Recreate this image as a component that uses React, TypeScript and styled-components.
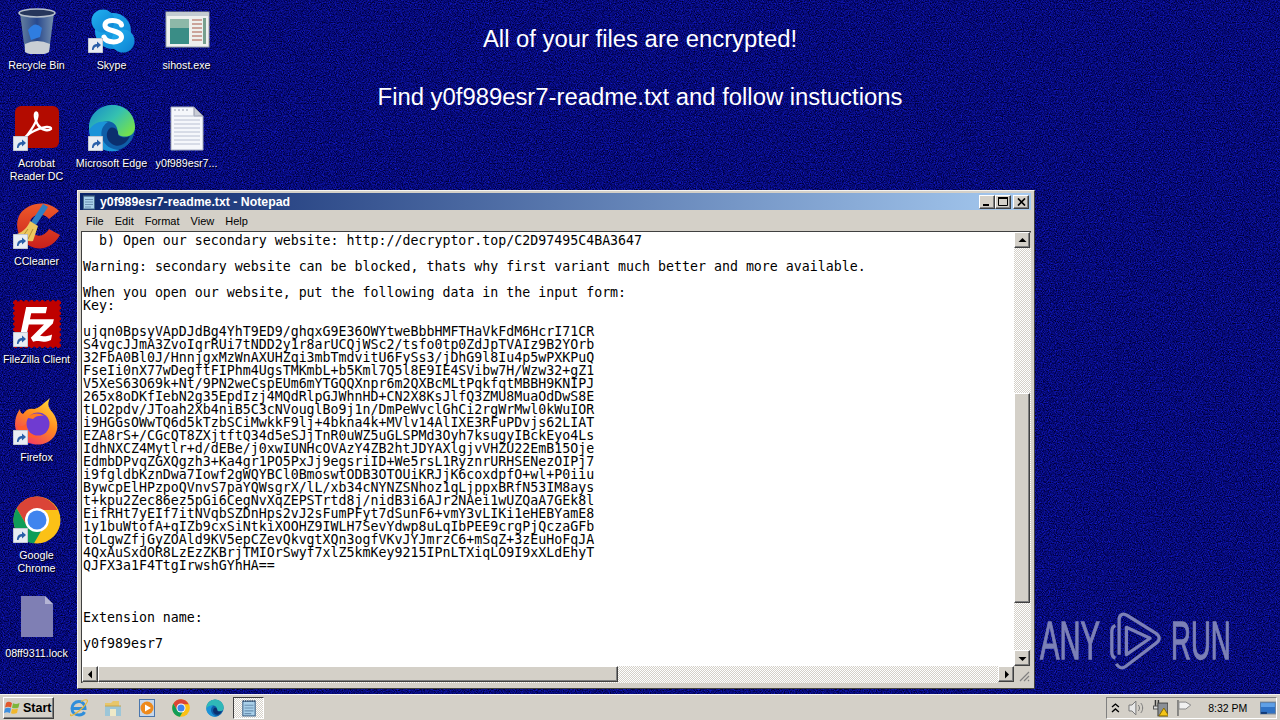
import React from "react";
import styled, { createGlobalStyle } from "styled-components";
import { SiFilezilla } from "react-icons/si";

const GlobalStyle = createGlobalStyle`
  html, body {
    margin: 0;
    width: 1280px;
    height: 720px;
    overflow: hidden;
    background: #0a0d7c;
  }
`;

const Colors = {
  face: "#d4d0c8",
  shade: "#808080",
  dark: "#404040",
  label: "#ffffff",
  mark: "#7c80b6",
};

const Screen = styled.div`
  position: relative;
  width: 1280px;
  height: 720px;
  overflow: hidden;
  display: flex;
  flex-direction: column;
  font-family: "Liberation Sans", Arial, sans-serif;
`;

const Wallpaper = styled.svg`
  position: absolute;
  inset: 0;
  width: 1280px;
  height: 720px;
`;

const Desktop = styled.div`
  position: relative;
  flex: 1;
  min-height: 0;
`;

const Message = styled.div`
  position: absolute;
  top: 10px;
  left: 0;
  right: 0;
  display: flex;
  flex-direction: column;
  align-items: center;
  color: #fff;
  font-size: 23.85px;
  line-height: 58px;
`;

const IconGrid = styled.div`
  position: absolute;
  top: 6px;
  left: -1px;
  display: grid;
  grid-template-columns: repeat(3, 75px);
  grid-auto-rows: 98px;
`;

const IconCell = styled.div<{ $col: number; $row: number }>`
  grid-column: ${(p) => p.$col};
  grid-row: ${(p) => p.$row};
  display: flex;
  flex-direction: column;
  align-items: center;
`;

const IconFrame = styled.div`
  position: relative;
  width: 48px;
  height: 48px;
  flex: none;

  & > svg {
    display: block;
  }
`;

const LinkBadge = styled.svg`
  position: absolute;
  left: 0;
  bottom: 1px;
  width: 15px;
  height: 15px;
`;

const IconLabel = styled.div`
  margin-top: 5px;
  width: 75px;
  text-align: center;
  color: ${Colors.label};
  font-size: 10.7px;
  line-height: 13px;
  white-space: pre-line;
  text-shadow: 1px 1px 1px #000;
`;

const Watermark = styled.div`
  position: absolute;
  top: 610px;
  left: 1040px;
  width: 191px;
  height: 62px;
  display: flex;
  align-items: center;
  gap: 10px;
  color: ${Colors.mark};
`;

const WatermarkWord = styled.span<{ $squeeze: number }>`
  font-size: 53px;
  line-height: 62px;
  width: 60px;
  flex: none;
  white-space: nowrap;
  transform: scaleX(${(p) => p.$squeeze});
  transform-origin: left center;
  -webkit-text-stroke: 1.3px ${Colors.mark};
`;

const Window = styled.div`
  position: absolute;
  top: 190px;
  left: 77px;
  width: 958px;
  height: 499px;
  box-sizing: border-box;
  padding: 2px 3px 5px 2px;
  display: flex;
  flex-direction: column;
  background: ${Colors.face};
  border-top: 1px solid #f4f2ee;
  border-left: 1px solid #f4f2ee;
  border-right: 1px solid ${Colors.dark};
  border-bottom: 1px solid ${Colors.dark};
`;

const TitleBar = styled.div`
  height: 17px;
  flex: none;
  display: flex;
  align-items: center;
  padding: 0 2px 0 1px;
  gap: 3px;
  background: linear-gradient(90deg, #0a246a, #a6caf0);
  color: #fff;
  font-size: 12.3px;
  font-weight: 700;
`;

const TitleText = styled.span`
  flex: 1;
`;

const CaptionGroup = styled.div`
  display: flex;
  align-items: center;
`;

const RaisedButton = styled.div`
  box-sizing: border-box;
  display: flex;
  align-items: center;
  justify-content: center;
  flex: none;
  background: ${Colors.face};
  border-top: 1px solid #fff;
  border-left: 1px solid #fff;
  border-right: 1px solid ${Colors.dark};
  border-bottom: 1px solid ${Colors.dark};
  box-shadow: inset -1px -1px 0 ${Colors.shade};
`;

const CaptionButton = styled(RaisedButton)<{ $gap?: number }>`
  width: 16px;
  height: 14px;
  margin-left: ${(p) => p.$gap ?? 0}px;
`;

const MenuBar = styled.div`
  height: 20px;
  flex: none;
  display: flex;
  align-items: center;
  gap: 11px;
  padding: 1px 0 0 6px;
  font-size: 11px;
  color: #000;
`;

const Client = styled.div`
  flex: 1;
  min-height: 0;
  display: flex;
  flex-direction: column;
  margin-left: 1px;
  border-top: 1px solid ${Colors.dark};
  border-left: 1px solid ${Colors.dark};
  box-shadow: inset 1px 1px 0 ${Colors.shade};
`;

const ClientRow = styled.div`
  flex: 1;
  min-height: 0;
  display: flex;
`;

const TextPane = styled.pre`
  flex: 1;
  margin: 0;
  padding: 2px 0 0 1px;
  overflow: hidden;
  background: #fff;
  color: #000;
  font-family: "DejaVu Sans Mono", "Liberation Mono", monospace;
  font-size: 13.28px;
  line-height: 13px;
`;

const VerticalBar = styled.div`
  width: 17px;
  flex: none;
  display: flex;
  flex-direction: column;
`;

const HorizontalBar = styled.div`
  height: 17px;
  flex: none;
  display: flex;
`;

const Track = styled.div`
  flex: 1;
  min-width: 0;
  min-height: 0;
  background: repeating-conic-gradient(${Colors.face} 0 25%, #fff 0 50%) 0 0 / 2px 2px;
`;

const ArrowButton = styled(RaisedButton)`
  width: 16px;
  height: 16px;
`;

const VerticalThumb = styled(RaisedButton)`
  width: 16px;
  height: 210px;
  margin-top: 145px;
`;

const HorizontalThumb = styled(RaisedButton)`
  width: 520px;
  height: 16px;
`;

const Grip = styled.div`
  width: 17px;
  flex: none;
  background: ${Colors.face};
`;

const Taskbar = styled.div`
  position: relative;
  margin-top: auto;
  height: 26px;
  flex: none;
  box-sizing: border-box;
  display: flex;
  align-items: center;
  padding: 1px 3px 0 3px;
  background: ${Colors.face};
  border-top: 1px solid #f4f2ee;
`;

const StartButton = styled(RaisedButton)`
  width: 51px;
  height: 22px;
  gap: 1px;
  justify-content: flex-start;
  font-size: 12.5px;
  font-weight: 700;
  color: #000;
`;

const QuickLaunch = styled.div`
  display: flex;
  align-items: center;
  gap: 14px;
  margin-left: 15px;
`;

const QuickSlot = styled.div`
  width: 20px;
  height: 20px;
  display: flex;
  align-items: center;
  justify-content: center;
`;

const TaskButton = styled.div`
  width: 31px;
  height: 22px;
  box-sizing: border-box;
  margin-left: 8px;
  display: flex;
  align-items: center;
  justify-content: center;
  background: repeating-conic-gradient(${Colors.face} 0 25%, #fff 0 50%) 0 0 / 2px 2px;
  border-top: 1px solid ${Colors.dark};
  border-left: 1px solid ${Colors.dark};
  border-right: 1px solid #fff;
  border-bottom: 1px solid #fff;
`;

const Tray = styled.div`
  margin-left: auto;
  width: 171px;
  height: 22px;
  box-sizing: border-box;
  display: flex;
  align-items: center;
  padding-left: 4px;
  gap: 8px;
  border-top: 1px solid ${Colors.shade};
  border-left: 1px solid ${Colors.shade};
  border-right: 1px solid #fff;
  border-bottom: 1px solid #fff;
`;

const Clock = styled.span`
  margin-left: 8px;
  width: 44px;
  flex: none;
  font-size: 10.5px;
  color: #000;
`;

const NOTE = `  b) Open our secondary website: http://decryptor.top/C2D97495C4BA3647

Warning: secondary website can be blocked, thats why first variant much better and more available.

When you open our website, put the following data in the input form:
Key:

ujqn0BpsyVApDJdBg4YhT9ED9/ghqxG9E36OWYtweBbbHMFTHaVkFdM6HcrI71CR
S4vgcJJmA3ZvoIqrRUi7tNDD2y1r8arUCQjWSc2/tsfo0tp0ZdJpTVAIz9B2YOrb
32FbA0Bl0J/HnnjgxMzWnAXUHZqi3mbTmdvitU6FySs3/jDhG9l8Iu4p5wPXKPuQ
FseIi0nX77wDegftFIPhm4UgsTMKmbL+b5Kml7Q5l8E9IE4SVibw7H/Wzw32+gZ1
V5XeS63O69k+Nt/9PN2weCspEUm6mYTGQQXnpr6m2QXBcMLtPqkfqtMBBH9KNIPJ
265x8oDKfIebN2g35EpdIzj4MQdRlpGJWhnHD+CN2X8KsJlfQ3ZMU8MuaOdDwS8E
tLO2pdv/JToah2Xb4niB5C3cNVouglBo9j1n/DmPeWvclGhCi2rgWrMwl0kWuIOR
i9HGGsOWwTQ6d5kTzbSCiMwkkF9lj+4bkna4k+MVlv14AlIXE3RFuPDvjs62LIAT
EZA8rS+/CGcQT8ZXjtftQ34d5eSJjTnR0uWZ5uGLSPMd3Oyh7ksugyIBckEyo4Ls
IdhNXCZ4Mytlr+d/dEBe/j0xwIUNHcOVAzY4ZB2htJDYAXlgjvVHZU22EmB15Oje
EdmbDPvqZGXQgzh3+Ka4gr1PO5PxJj9egsriID+We5rsL1RyznrURHSENezOIPj7
i9fgldbKznDwa7Iowf2gWQYBCl0BmoswtODB3OTOUiKRJjK6coxdpfO+wl+P0iiu
BywcpElHPzpoQVnvS7paYQWsgrX/lL/xb34cNYNZSNhoz1qLjppxBRfN53IM8ays
t+kpu2Zec86ez5pGi6CegNvXqZEPSTrtd8j/nidB3i6AJr2NAei1wUZQaA7GEk8l
EifRHt7yEIf7itNVqbSZDnHps2vJ2sFumPFyt7dSunF6+vmY3vLIKi1eHEBYamE8
1y1buWtofA+qIZb9cxSiNtkiXOOHZ9IWLH7SevYdwp8uLqIbPEE9crgPjQczaGFb
toLgwZfjGyZOAld9KV5epCZevQkvgtXQn3ogfVKvJYJmrzC6+mSqZ+3zEuHoFqJA
4QxAuSxdOR8LzEzZKBrjTMIOrSwyf7xlZ5kmKey9215IPnLTXiqLO9I9xXLdEhyT
QJFX3a1F4TtgIrwshGYhHA==



Extension name:

y0f989esr7`;

const Arrow = ({ dir }: { dir: "up" | "down" | "left" | "right" }) => {
  const points = {
    up: "0.5,6 4.5,2 8.5,6",
    down: "0.5,3 4.5,7 8.5,3",
    left: "6,0.5 2,4.5 6,8.5",
    right: "3,0.5 7,4.5 3,8.5",
  };
  return (
    <svg width="9" height="9" viewBox="0 0 9 9">
      <polygon points={points[dir]} fill="#000" />
    </svg>
  );
};

const NotepadGlyph = ({ size = 16 }: { size?: number }) => (
  <svg width={size} height={size} viewBox="0 0 16 16">
    <rect x="2.5" y="2" width="11" height="13" fill="#a9d0ea" stroke="#45688c" />
    <path d="M4 5.5h8M4 8h8M4 10.5h8M4 13h6" stroke="#6b8fb0" />
    <path d="M3 2.5V1M5 2.5V1M7 2.5V1M9 2.5V1M11 2.5V1M13 2.5V1" stroke="#334a66" />
  </svg>
);

const RecycleBin = () => (
  <svg width="48" height="48" viewBox="0 0 48 48">
    <defs>
      <linearGradient id="binBody" x1="0" x2="1">
        <stop offset="0" stopColor="#66809f" />
        <stop offset="0.5" stopColor="#28488c" />
        <stop offset="1" stopColor="#7690ae" />
      </linearGradient>
    </defs>
    <path d="M7 7 L12 46 Q24 52 36 46 L41 7 Z" fill="url(#binBody)" />
    <path d="M12 38 Q24 32 37 38 L36 46 Q24 52 12 46 Z" fill="#c9ced4" />
    <path d="M15 24 Q22 14 29 22 L27 31 L18 34 Z" fill="#2f7de0" />
    <ellipse cx="24" cy="7" rx="18" ry="4" fill="#26365c" stroke="#b6c0cc" strokeWidth="1.6" />
  </svg>
);

const SkypeIcon = () => (
  <svg width="48" height="48" viewBox="0 0 48 48">
    <defs>
      <linearGradient id="skypeFill" x1="0" y1="0" x2="1" y2="1">
        <stop offset="0" stopColor="#22b3f2" />
        <stop offset="1" stopColor="#0b7fd0" />
      </linearGradient>
    </defs>
    <g fill="url(#skypeFill)">
      <circle cx="25" cy="25" r="18" />
      <circle cx="15" cy="15" r="11.5" />
      <circle cx="35" cy="35" r="11.5" />
    </g>
    <path
      d="M33.5 19 C32 13.5 17.5 12.5 17 19 C16.5 26 33.5 23.5 33.5 31 C33.5 37.5 18.5 37.5 16 31"
      fill="none"
      stroke="#fff"
      strokeWidth="5"
      strokeLinecap="round"
    />
  </svg>
);

const SihostIcon = () => (
  <svg width="48" height="48" viewBox="0 0 48 48">
    <rect x="3" y="6" width="43" height="35" fill="#eef0ee" stroke="#9aa3a8" />
    <rect x="4" y="7" width="41" height="3" fill="#c3ccd2" />
    <rect x="7" y="13" width="19" height="25" fill="#3a8d86" />
    <rect x="7" y="13" width="19" height="9" fill="#8db8a8" />
    <path d="M29 14h10M29 18h10M29 22h10M29 26h10M29 30h10M29 34h10" stroke="#c08a80" strokeWidth="1.4" />
    <rect x="40" y="12" width="3" height="26" fill="#77a08e" />
  </svg>
);

const AcrobatIcon = () => (
  <svg width="48" height="48" viewBox="0 0 48 48">
    <rect x="2" y="2" width="44" height="42" rx="6" fill="#b30b00" />
    <path
      d="M12 34 C20 24 26 14 24 9 C22 7 20 12 25 21 C29 27 36 27 38 25 C39 22 30 22 21 27 C15 30 12 33 12 34 Z"
      fill="none"
      stroke="#fff"
      strokeWidth="2.4"
    />
  </svg>
);

const EdgeIcon = () => (
  <svg width="48" height="48" viewBox="0 0 48 48">
    <defs>
      <linearGradient id="edgeTop" x1="0" y1="0" x2="1" y2="0.7">
        <stop offset="0" stopColor="#1689c9" />
        <stop offset="0.55" stopColor="#35c1b0" />
        <stop offset="1" stopColor="#72e04f" />
      </linearGradient>
    </defs>
    <circle cx="24" cy="24" r="23" fill="#0f5ea8" />
    <path d="M1 24 C1 9 13 1 25 1 C38 1 47 11 47 23 C47 31 40 34 33 32 C29 31 30 27 29 24 C27 18 21 16 15 18 C8 20 3 24 1 27 Z" fill="url(#edgeTop)" />
    <path d="M1 26 C5 19 13 16 20 18 C15 21 12 27 14 34 C16 41 23 46 32 46 C24 49 11 47 5 38 C2 34 1 30 1 26 Z" fill="#1b93d8" />
    <path d="M22 24 C27 22 31 27 30 31 C33 34 38 34 42 32 C38 41 30 44 24 40 C18 36 17 28 22 24 Z" fill="#0b2f6e" />
  </svg>
);

const PageIcon = ({ ruled }: { ruled: boolean }) => (
  <svg width="48" height="48" viewBox="0 0 48 48">
    {ruled ? (
      <>
        <path d="M8 3 H31 L40 12 V46 H8 Z" fill="#f5f7fb" stroke="#a6adc0" />
        <path d="M31 3 L40 12 H31 Z" fill="#c9ccd6" stroke="#8f95a8" />
        <path d="M11 12h24M11 16h26M11 20h26M11 24h26M11 28h26M11 32h26M11 36h26M11 40h26" stroke="#b9c0d2" />
        <path d="M11 6h2M15 6h2M19 6h2M23 6h2" stroke="#9aa0b0" />
      </>
    ) : (
      <>
        <path d="M8 2 H32 L40 10 V43 H8 Z" fill="#7f7fb4" />
        <path d="M32 2 L40 10 H32 Z" fill="#b4b4d4" />
      </>
    )}
  </svg>
);

const CCleanerIcon = () => (
  <svg width="48" height="48" viewBox="0 0 48 48">
    <defs>
      <linearGradient id="ccRing" x1="0" y1="0" x2="0" y2="1">
        <stop offset="0" stopColor="#ee5a2a" />
        <stop offset="1" stopColor="#c8201c" />
      </linearGradient>
    </defs>
    <path d="M46 9 C36 -2 16 -1 7 12 C0 24 6 42 22 46 C33 48 42 42 47 33 L36 27 C33 32 28 35 23 33 C15 31 14 20 20 15 C25 11 32 12 36 17 Z" fill="url(#ccRing)" />
    <path d="M30 2 L35 5 L23 23 L18 20 Z" fill="#2f7fc4" />
    <path d="M17 19 L25 24 L20 39 C14 40 8 37 4 32 C10 30 15 25 17 19 Z" fill="#ecc75f" />
    <path d="M10 34 L15 27 M15 37 L20 27" stroke="#b78f33" />
  </svg>
);

const FileZillaIcon = () => (
  <svg width="48" height="48" viewBox="0 0 48 48">
    <rect x="2" y="2" width="44" height="44" fill="#fff" />
    <g style={{ color: "#bf0000" }}>
      <SiFilezilla x={0} y={0} size={48} />
    </g>
  </svg>
);

const FirefoxIcon = () => (
  <svg width="48" height="48" viewBox="0 0 48 48">
    <defs>
      <linearGradient id="foxBody" x1="0.8" y1="0" x2="0.2" y2="1">
        <stop offset="0" stopColor="#ffdb3a" />
        <stop offset="0.45" stopColor="#ff8a1f" />
        <stop offset="1" stopColor="#f0326a" />
      </linearGradient>
    </defs>
    <path d="M37 0 C34 7 35 9 40 15 C48 26 45 42 30 46 C15 49 2 39 2 26 C2 20 4 15 7 11 C7 14 8 15 10 16 C13 11 17 10 21 11 C26 10 30 6 37 0 Z" fill="url(#foxBody)" />
    <circle cx="25" cy="26" r="11.5" fill="#6f3bd1" />
    <path d="M14 20 C18 15 26 14 31 18 C27 17 22 18 20 21 C17 20 15 20 14 20 Z" fill="#ff7a20" />
    <path d="M3 26 C6 36 16 42 27 39 C18 38 13 32 13 26 C9 29 6 29 3 26 Z" fill="#ff5b2d" />
  </svg>
);

const ChromeIcon = ({ size = 48 }: { size?: number }) => (
  <svg width={size} height={size} viewBox="0 0 48 48">
    <circle cx="24" cy="24" r="23.5" fill="#fbc116" />
    <path d="M24 .5 A23.5 23.5 0 0 0 3.6 12.3 L14 30 L24 14 H44.4 A23.5 23.5 0 0 0 24 .5 Z" fill="#db4437" />
    <path d="M3.6 12.3 A23.5 23.5 0 0 0 21 47.3 L31 30 L14 30 Z" fill="#0f9d58" />
    <circle cx="24" cy="24" r="12" fill="#fff" />
    <circle cx="24" cy="24" r="9.5" fill="#3f84ee" />
  </svg>
);

const ShortcutBadge = () => (
  <LinkBadge viewBox="0 0 15 15">
    <rect width="15" height="15" fill="#e8ecf2" stroke="#9ca4b4" />
    <path d="M4 12 C4 8 6 6 9 6 L9 3.5 L13 7 L9 10.5 L9 8.5 C7 8.5 6 10 5.5 12 Z" fill="#2a5fa8" />
  </LinkBadge>
);

const desktopIcons = [
  { col: 1, row: 1, label: "Recycle Bin", art: <RecycleBin /> },
  { col: 1, row: 2, label: "Acrobat\nReader DC", art: <AcrobatIcon />, link: true },
  { col: 1, row: 3, label: "CCleaner", art: <CCleanerIcon />, link: true },
  { col: 1, row: 4, label: "FileZilla Client", art: <FileZillaIcon />, link: true },
  { col: 1, row: 5, label: "Firefox", art: <FirefoxIcon />, link: true },
  { col: 1, row: 6, label: "Google\nChrome", art: <ChromeIcon />, link: true },
  { col: 1, row: 7, label: "08ff9311.lock", art: <PageIcon ruled={false} /> },
  { col: 2, row: 1, label: "Skype", art: <SkypeIcon />, link: true },
  { col: 2, row: 2, label: "Microsoft Edge", art: <EdgeIcon />, link: true },
  { col: 3, row: 1, label: "sihost.exe", art: <SihostIcon /> },
  { col: 3, row: 2, label: "y0f989esr7...", art: <PageIcon ruled /> },
];

const WindowsFlag = () => (
  <svg width="18" height="16" viewBox="0 0 18 16">
    <path d="M2 3 C4 1 6 2 8 3 L7 7.5 C5 6.5 3 6.5 1 7.5 Z" fill="#e2582c" />
    <path d="M9 3.2 C11 4.2 13 4.2 15.5 3 L14.5 7.5 C12.5 8.6 10 8.6 8 7.8 Z" fill="#7db63a" />
    <path d="M1 8.5 C3 7.5 5 7.5 7 8.4 L6 13 C4 12 2 12 0 13 Z" fill="#3d8fe0" />
    <path d="M8 8.7 C10 9.5 12 9.5 14 8.5 L13 13 C11 14 9 14 7 13.2 Z" fill="#f1b72d" />
  </svg>
);

const IEGlyph = () => (
  <svg width="20" height="20" viewBox="0 0 20 20">
    <path d="M3 10.5 H16 C16 6 13 3.5 10 3.5 C6 3.5 3 6.5 3 10.5 C3 14.5 6 17 10 17 C12.5 17 14.5 16 15.5 14" fill="none" stroke="#2f8edb" strokeWidth="3" />
    <path d="M2 16 C0 19 4 18 10 13 C15 9 20 3 18 2 C16 1 13 3 12 3.5" fill="none" stroke="#e8b93a" strokeWidth="1.2" />
  </svg>
);

const FolderGlyph = () => (
  <svg width="20" height="20" viewBox="0 0 20 20">
    <path d="M2 5 H8 L10 3 H16 V8 H2 Z" fill="#e7c66a" />
    <rect x="2" y="8" width="16" height="10" fill="#9cc6d8" />
    <rect x="7" y="11" width="6" height="7" fill="#eee9c8" />
    <path d="M2 8 H18" stroke="#caa64a" />
  </svg>
);

const MediaGlyph = () => (
  <svg width="18" height="18" viewBox="0 0 18 18">
    <rect x="1.5" y="0.5" width="15" height="17" fill="#c7d7ea" stroke="#4a76ad" />
    <circle cx="9" cy="9" r="6.5" fill="#ee8a1c" />
    <polygon points="7,5.5 13,9 7,12.5" fill="#fff" />
  </svg>
);

const EdgeGlyph = () => (
  <svg width="18" height="18" viewBox="0 0 48 48">
    <circle cx="24" cy="24" r="23" fill="#0f5ea8" />
    <path d="M1 24 C1 9 13 1 25 1 C38 1 47 11 47 23 C47 31 40 34 33 32 C29 31 30 27 29 24 C27 18 21 16 15 18 C8 20 3 24 1 27 Z" fill="#2fb8b8" />
    <path d="M1 26 C5 19 13 16 20 18 C15 21 12 27 14 34 C16 41 23 46 32 46 C24 49 11 47 5 38 C2 34 1 30 1 26 Z" fill="#1b93d8" />
    <path d="M22 24 C27 22 31 27 30 31 C33 34 38 34 42 32 C38 41 30 44 24 40 C18 36 17 28 22 24 Z" fill="#0b2f6e" />
  </svg>
);

const App = () => (
  <Screen>
    <GlobalStyle />
    <Wallpaper aria-hidden>
      <filter id="grain" x="0" y="0" width="100%" height="100%" colorInterpolationFilters="sRGB">
        <feTurbulence type="fractalNoise" baseFrequency="0.85" numOctaves="2" seed="7" />
        <feColorMatrix
          type="matrix"
          values="0.15 0 0 0 -0.05  0.2 0 0 0 -0.06  1 0 0 0 -0.03  0 0 0 0 1"
        />
      </filter>
      <rect width="1280" height="720" filter="url(#grain)" />
    </Wallpaper>

    <Desktop>
      <Message>
        <span>All of your files are encrypted!</span>
        <span>Find y0f989esr7-readme.txt and follow instuctions</span>
      </Message>

      <IconGrid>
        {desktopIcons.map((icon) => (
          <IconCell key={icon.label} $col={icon.col} $row={icon.row}>
            <IconFrame>
              {icon.art}
              {icon.link && <ShortcutBadge />}
            </IconFrame>
            <IconLabel>{icon.label}</IconLabel>
          </IconCell>
        ))}
      </IconGrid>

      <Watermark>
        <WatermarkWord $squeeze={0.55}>ANY</WatermarkWord>
        <svg width="56" height="62" viewBox="0 0 56 62" fill="none" stroke={Colors.mark} strokeWidth="3.6" strokeLinejoin="round">
          <path d="M6 14 C3 15 2 17 2 20 V44 C2 47 3 49 6 50" />
          <path d="M10 46 V8 C10 2 14 0 19 3 L51 23 C55 26 55 30 51 33 L17 59 C13 62 9 60 7 56" />
          <path d="M18 16 L44 28 L18 46 Z" />
        </svg>
        <WatermarkWord $squeeze={0.52}>RUN</WatermarkWord>
      </Watermark>

      <Window>
        <TitleBar>
          <NotepadGlyph />
          <TitleText>y0f989esr7-readme.txt - Notepad</TitleText>
          <CaptionGroup>
            <CaptionButton>
              <svg width="8" height="8" viewBox="0 0 8 8">
                <rect x="0" y="6" width="6" height="2" fill="#000" />
              </svg>
            </CaptionButton>
            <CaptionButton>
              <svg width="10" height="9" viewBox="0 0 10 9">
                <path d="M.5 1.5h9v7h-9z" fill="none" stroke="#000" />
                <path d="M0 1h10" stroke="#000" strokeWidth="2" />
              </svg>
            </CaptionButton>
            <CaptionButton $gap={2}>
              <svg width="9" height="8" viewBox="0 0 9 8">
                <path d="M1 0.5 L8 7.5 M8 0.5 L1 7.5" stroke="#000" strokeWidth="1.7" />
              </svg>
            </CaptionButton>
          </CaptionGroup>
        </TitleBar>

        <MenuBar>
          <span>File</span>
          <span>Edit</span>
          <span>Format</span>
          <span>View</span>
          <span>Help</span>
        </MenuBar>

        <Client>
          <ClientRow>
            <TextPane>{NOTE}</TextPane>
            <VerticalBar>
              <ArrowButton><Arrow dir="up" /></ArrowButton>
              <Track><VerticalThumb /></Track>
              <ArrowButton><Arrow dir="down" /></ArrowButton>
            </VerticalBar>
          </ClientRow>
          <HorizontalBar>
            <ArrowButton><Arrow dir="left" /></ArrowButton>
            <Track><HorizontalThumb /></Track>
            <ArrowButton><Arrow dir="right" /></ArrowButton>
            <Grip>
              <svg width="17" height="17" viewBox="0 0 17 17">
                <path d="M15 6 L6 15 M15 10 L10 15 M15 14 L14 15" stroke="#808080" strokeWidth="1.2" />
              </svg>
            </Grip>
          </HorizontalBar>
        </Client>
      </Window>
    </Desktop>

    <Taskbar>
      <StartButton>
        <WindowsFlag />
        Start
      </StartButton>
      <QuickLaunch>
        <QuickSlot><IEGlyph /></QuickSlot>
        <QuickSlot><FolderGlyph /></QuickSlot>
        <QuickSlot><MediaGlyph /></QuickSlot>
        <QuickSlot><ChromeIcon size={18} /></QuickSlot>
        <QuickSlot><EdgeGlyph /></QuickSlot>
      </QuickLaunch>
      <TaskButton>
        <NotepadGlyph size={18} />
      </TaskButton>
      <Tray>
        <svg width="9" height="12" viewBox="0 0 9 12" fill="none" stroke="#000" strokeWidth="1.4">
          <path d="M1 5 L4.5 2 L8 5 M1 10 L4.5 7 L8 10" />
        </svg>
        <svg width="17" height="18" viewBox="0 0 17 18" fill="none" stroke="#777">
          <path d="M1 6 H4 L8 2 V16 L4 12 H1 Z" fill="#e8e8e8" />
          <path d="M10.5 6 C12 8 12 10 10.5 12 M13 4 C15.5 7 15.5 11 13 14" />
        </svg>
        <svg width="16" height="18" viewBox="0 0 16 18">
          <path d="M2.5 1 V8 M5.5 1 V8" stroke="#333" strokeWidth="1.5" />
          <rect x="0.5" y="7" width="6" height="3" fill="#ddd" stroke="#555" />
          <rect x="5" y="4" width="10" height="13" fill="#8a8f96" stroke="#444" />
          <polygon points="11,9 16,17 6,17" fill="#f5c518" stroke="#8a6d00" />
        </svg>
        <svg width="16" height="18" viewBox="0 0 16 18" fill="none">
          <path d="M2 1 V17" stroke="#666" strokeWidth="1.4" />
          <path d="M3 3 H10 L15 6 L10 10 H3 Z" fill="#f0f0f0" stroke="#888" />
        </svg>
        <Clock>8:32 PM</Clock>
        <svg width="16" height="15" viewBox="0 0 16 15">
          <rect x="0" y="1" width="16" height="12" fill="#2f72c4" stroke="#7a8794" />
          <rect x="1" y="2" width="14" height="4" fill="#5fa0e6" />
          <rect x="1" y="11" width="6" height="2" fill="#123b78" />
        </svg>
      </Tray>
    </Taskbar>
  </Screen>
);

export default App;
